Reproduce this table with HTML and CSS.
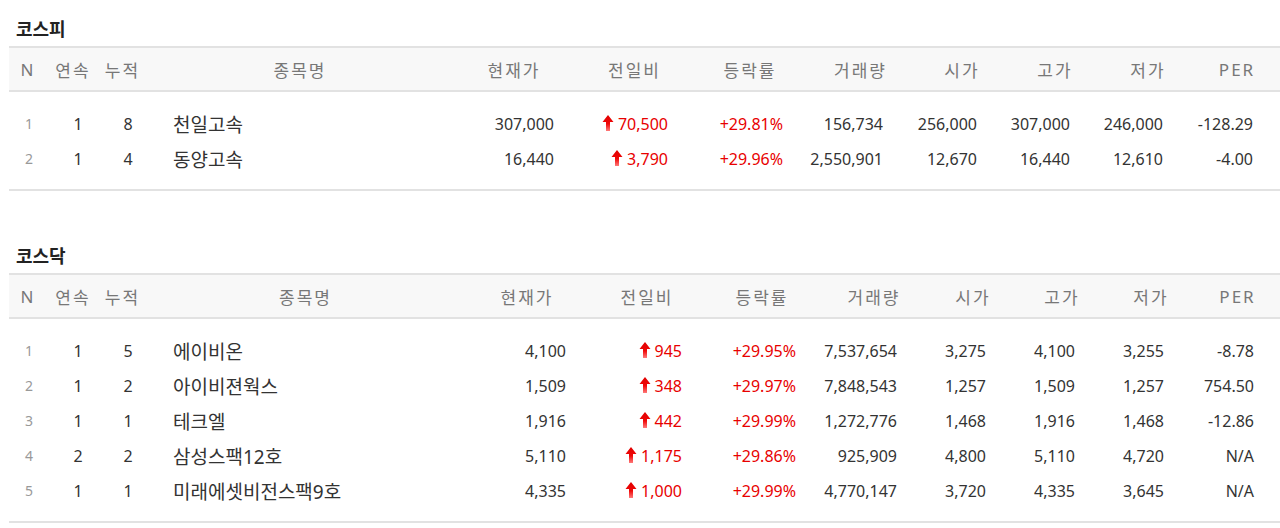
FILE: index.html
```html
<!DOCTYPE html>
<html lang="ko">
<head>
<meta charset="utf-8">
<title>상한가 종목</title>
<link rel="stylesheet" href="styles.css">
</head>
<body>
<svg width="0" height="0" class="defs" aria-hidden="true">
  <defs>
    <linearGradient id="upGrad" x1="0" y1="0" x2="0" y2="1">
      <stop offset="0" stop-color="#e00000"/>
      <stop offset="0.55" stop-color="#f00808"/>
      <stop offset="1" stop-color="#ff7a7a"/>
    </linearGradient>
    <symbol id="up" viewBox="0 0 12 16">
      <path d="M6 0 L11.5 7 L8 7 L8 16 L4 16 L4 7 L0.5 7 Z" fill="url(#upGrad)"/>
    </symbol>
  </defs>
</svg>
<div class="page">
  <section class="market market--kospi">
    <h2 class="market-title">코스피</h2>
    <div class="board">
      <div class="board-head">
        <span>N</span><span>연속</span><span>누적</span><span>종목명</span><span>현재가</span><span>전일비</span><span>등락률</span><span>거래량</span><span>시가</span><span>고가</span><span>저가</span><span>PER</span>
      </div>
      <div class="board-body">
        <div class="row">
          <span class="c-n">1</span><span class="c-cnt">1</span><span class="c-cnt">8</span><span class="c-name">천일고속</span><span class="c-val">307,000</span><span class="c-val up"><svg class="arrow"><use href="#up"/></svg>70,500</span><span class="c-val up">+29.81%</span><span class="c-val">156,734</span><span class="c-val">256,000</span><span class="c-val">307,000</span><span class="c-val">246,000</span><span class="c-val">-128.29</span>
        </div>
        <div class="row">
          <span class="c-n">2</span><span class="c-cnt">1</span><span class="c-cnt">4</span><span class="c-name">동양고속</span><span class="c-val">16,440</span><span class="c-val up"><svg class="arrow"><use href="#up"/></svg>3,790</span><span class="c-val up">+29.96%</span><span class="c-val">2,550,901</span><span class="c-val">12,670</span><span class="c-val">16,440</span><span class="c-val">12,610</span><span class="c-val">-4.00</span>
        </div>
      </div>
    </div>
  </section>

  <section class="market market--kosdaq">
    <h2 class="market-title">코스닥</h2>
    <div class="board">
      <div class="board-head">
        <span>N</span><span>연속</span><span>누적</span><span>종목명</span><span>현재가</span><span>전일비</span><span>등락률</span><span>거래량</span><span>시가</span><span>고가</span><span>저가</span><span>PER</span>
      </div>
      <div class="board-body">
        <div class="row">
          <span class="c-n">1</span><span class="c-cnt">1</span><span class="c-cnt">5</span><span class="c-name">에이비온</span><span class="c-val">4,100</span><span class="c-val up"><svg class="arrow"><use href="#up"/></svg>945</span><span class="c-val up">+29.95%</span><span class="c-val">7,537,654</span><span class="c-val">3,275</span><span class="c-val">4,100</span><span class="c-val">3,255</span><span class="c-val">-8.78</span>
        </div>
        <div class="row">
          <span class="c-n">2</span><span class="c-cnt">1</span><span class="c-cnt">2</span><span class="c-name">아이비젼웍스</span><span class="c-val">1,509</span><span class="c-val up"><svg class="arrow"><use href="#up"/></svg>348</span><span class="c-val up">+29.97%</span><span class="c-val">7,848,543</span><span class="c-val">1,257</span><span class="c-val">1,509</span><span class="c-val">1,257</span><span class="c-val">754.50</span>
        </div>
        <div class="row">
          <span class="c-n">3</span><span class="c-cnt">1</span><span class="c-cnt">1</span><span class="c-name">테크엘</span><span class="c-val">1,916</span><span class="c-val up"><svg class="arrow"><use href="#up"/></svg>442</span><span class="c-val up">+29.99%</span><span class="c-val">1,272,776</span><span class="c-val">1,468</span><span class="c-val">1,916</span><span class="c-val">1,468</span><span class="c-val">-12.86</span>
        </div>
        <div class="row">
          <span class="c-n">4</span><span class="c-cnt">2</span><span class="c-cnt">2</span><span class="c-name">삼성스팩12호</span><span class="c-val">5,110</span><span class="c-val up"><svg class="arrow"><use href="#up"/></svg>1,175</span><span class="c-val up">+29.86%</span><span class="c-val">925,909</span><span class="c-val">4,800</span><span class="c-val">5,110</span><span class="c-val">4,720</span><span class="c-val">N/A</span>
        </div>
        <div class="row">
          <span class="c-n">5</span><span class="c-cnt">1</span><span class="c-cnt">1</span><span class="c-name">미래에셋비전스팩9호</span><span class="c-val">4,335</span><span class="c-val up"><svg class="arrow"><use href="#up"/></svg>1,000</span><span class="c-val up">+29.99%</span><span class="c-val">4,770,147</span><span class="c-val">3,720</span><span class="c-val">4,335</span><span class="c-val">3,645</span><span class="c-val">N/A</span>
        </div>
      </div>
    </div>
  </section>
</div>
</body>
</html>
```

FILE: styles.css
```css
* { box-sizing: border-box; }

html, body {
  margin: 0;
  padding: 0;
  background: #fff;
}

body {
  font-family: "Noto Sans", "Noto Sans CJK KR", sans-serif;
  color: #333;
  font-size: 16px;
}

.defs { position: absolute; width: 0; height: 0; overflow: hidden; }

.page {
  padding: 17px 0 0 9px;
}

.market + .market {
  margin-top: 53px;
}

.market-title {
  margin: 0 0 5px 7px;
  font-size: 18px;
  line-height: 24px;
  font-weight: 700;
  color: #222;
}

.board-head {
  display: grid;
  height: 46px;
  align-items: center;
  background: #f8f8f8;
  border-top: 2px solid #e2e2e2;
  border-bottom: 2px solid #e2e2e2;
  font-size: 17px;
  letter-spacing: 2px;
  color: #777;
}

.board-head span {
  text-align: center;
}

.board-body {
  padding: 14px 0 13px;
  border-bottom: 2px solid #e2e2e2;
}

.row {
  display: grid;
  height: 35px;
  align-items: center;
  white-space: nowrap;
}

.c-n {
  text-align: center;
  font-size: 14px;
  color: #999;
}

.c-cnt {
  text-align: center;
  color: #333;
}

.c-name {
  padding-left: 24px;
  font-size: 19px;
  color: #333;
}

.c-val {
  text-align: right;
}

.up {
  color: #e80000;
}

.arrow {
  width: 12px;
  height: 16px;
  margin-right: 4px;
  vertical-align: -1px;
}

.market--kospi .board-head {
  grid-template-columns: 38px 52px 47px 308px 120px 121px 110px 111px 92px 94px 92px 1fr;
}

.market--kospi .row {
  grid-template-columns: 40px 58px 42px 305px 100px 114px 115px 100px 94px 93px 93px 90px;
}

.market--kosdaq .board-head {
  grid-template-columns: 38px 52px 47px 319px 124px 116px 114px 110px 88px 90px 88px 1fr;
}

.market--kosdaq .row {
  grid-template-columns: 40px 58px 42px 317px 100px 116px 114px 101px 89px 89px 89px 90px;
}
```
